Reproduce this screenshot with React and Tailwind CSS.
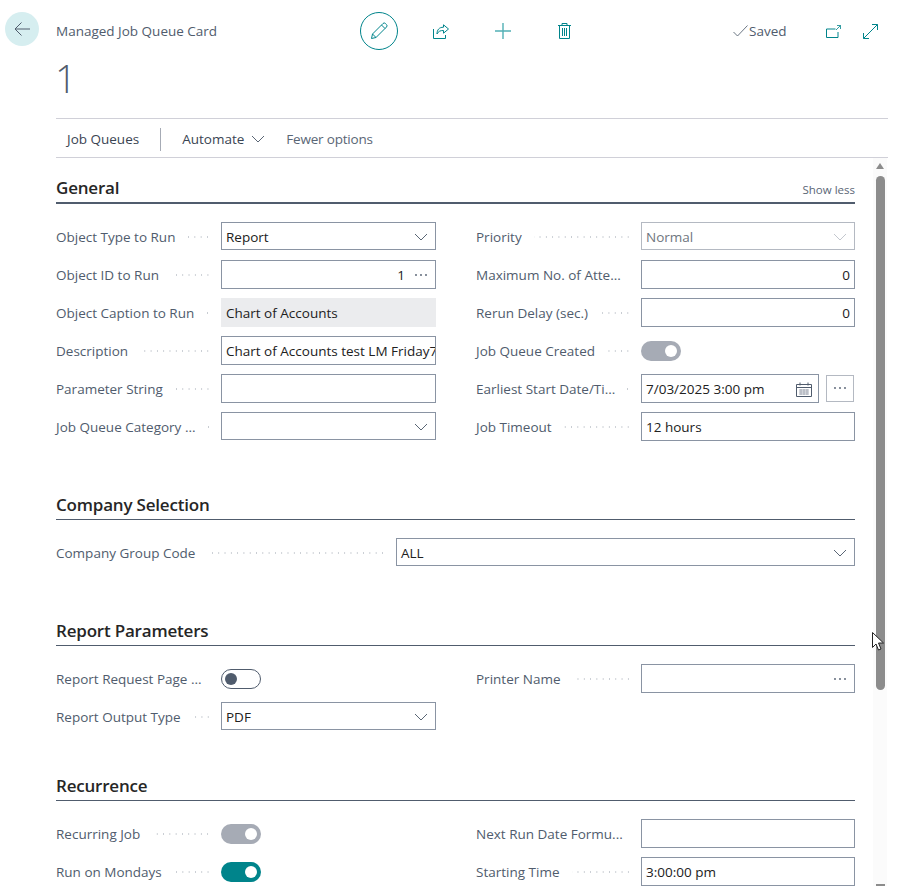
import React from 'react';

const font = { fontFamily: '"Open Sans", "Noto Sans", sans-serif' };

function Chevron({ light }) {
  return (
    <svg width="14" height="8" viewBox="0 0 14 8" fill="none" className={light ? 'stroke-[#c3c7ce]' : 'stroke-[#5a6675]'}>
      <path d="M1 1l6 6 6-6" strokeWidth="1" />
    </svg>
  );
}

function Dots() {
  return (
    <svg width="14" height="4" viewBox="0 0 14 4" className="text-[#505c6d]" fill="currentColor">
      <circle cx="2" cy="2" r="0.9" />
      <circle cx="7" cy="2" r="0.9" />
      <circle cx="12" cy="2" r="0.9" />
    </svg>
  );
}

function Leader() {
  return <span className="ml-3 h-[2px] min-w-0 flex-1 bg-[radial-gradient(circle,#c8ccd2_1px,transparent_1px)] bg-[length:6.3px_2px] bg-right bg-repeat-x"></span>;
}

function Label({ text }) {
  return (
    <div className="flex w-[165px] shrink-0 items-center pt-[2px] pr-[10px]">
      <span className="whitespace-nowrap text-[13.5px] text-[#505c6d]">{text}</span>
      <Leader />
    </div>
  );
}

function Input({ children, className = '', h = 'h-[29px]', border = 'border-[#8a94a3]', bg = 'bg-white', color = 'text-[#212121]' }) {
  return (
    <div className={`flex ${h} min-w-0 flex-1 items-center overflow-hidden border pt-[2px] ${border} ${bg} ${color} px-[4px] text-[13.5px] whitespace-nowrap ${className}`}>
      {children}
    </div>
  );
}

function Select({ value, disabled }) {
  return (
    <Input
      h="h-[28px]"
      border={disabled ? 'border-[#b4b9c2]' : 'border-[#8a94a3]'}
      color={disabled ? 'text-[#6f7680]' : 'text-[#212121]'}
      className="justify-between pr-[7px]"
    >
      <span>{value}</span>
      <Chevron light={disabled} />
    </Input>
  );
}

function Toggle({ state }) {
  if (state === 'off') {
    return (
      <div className="mt-[2px] flex h-[20px] w-[40px] items-center rounded-full border border-[#505c6d] bg-white pl-[3px]">
        <div className="h-[12px] w-[12px] rounded-full bg-[#505c6d]"></div>
      </div>
    );
  }
  return (
    <div className={`mt-[2px] flex h-[20px] w-[40px] items-center justify-end rounded-full pr-[4px] ${state === 'on' ? 'bg-[#00848b]' : 'bg-[#a6abb5]'}`}>
      <div className="h-[12px] w-[12px] rounded-full bg-white"></div>
    </div>
  );
}

function Row({ label, children }) {
  return (
    <div className="flex h-[38px] items-center">
      <Label text={label} />
      <div className="flex min-w-0 flex-1 items-center">{children}</div>
    </div>
  );
}

function Heading({ children, right, thick }) {
  return (
    <div className={`flex h-[32px] items-center justify-between pt-[2px] ${thick ? 'border-b-2' : 'border-b'} border-[#505c6d]`}>
      <h2 className="text-[17px] font-semibold tracking-[-0.2px] text-[#262626]">{children}</h2>
      {right}
    </div>
  );
}

export default function App() {
  return (
    <div className="relative h-[886px] w-[923px] overflow-hidden bg-white" style={font}>
      {/* header */}
      <div className="flex h-[62px] items-center pl-[5px]">
        <button className="mb-[4px] flex h-[34px] w-[34px] items-center justify-center rounded-full bg-[#d6eef0]">
          <svg width="16" height="14" viewBox="0 0 16 14" fill="none" stroke="#505c6d" strokeWidth="1">
            <path d="M16 7H1M7.500.5L1 7l6.500 6.500" />
          </svg>
        </button>
        <span className="ml-[17px] w-[304px] text-[13.5px] text-[#505c6d]">Managed Job Queue Card</span>
        <button className="flex h-[38px] w-[38px] items-center justify-center rounded-full border border-[#00848b]">
          <svg width="18" height="18" viewBox="0 0 18 18" fill="none" stroke="#00848b" strokeWidth="1">
            <path d="M1.500 16.500l1-4.500L13 1.500a1.700 1.700 0 0 1 2.400 0l1.100 1.100a1.700 1.700 0 0 1 0 2.400L6 15.500l-4.500 1zM2.500 12l3.500 3.500M11.500 3l3.500 3.500" />
          </svg>
        </button>
        <svg className="ml-[35px]" width="16" height="15" viewBox="0 0 16 15" fill="none" stroke="#00848b" strokeWidth="1">
          <path d="M.5 5v9.500h12V11" />
          <path d="M15.500 5L10.500.8v2.400C6 3.200 4 6 4 10c1.500-3 3.500-3.500 6.500-3.500v2.700z" />
        </svg>
        <svg className="ml-[46px]" width="16" height="16" viewBox="0 0 16 16" stroke="#52b0b5" strokeWidth="1.4">
          <path d="M8 0v16M0 8h16" />
        </svg>
        <svg className="ml-[47px]" width="13" height="16" viewBox="0 0 13 16" fill="none" stroke="#00848b" strokeWidth="1">
          <path d="M0 2.500h13M4 2.500V.5h5v2M1.500 2.500v13h10v-13M4.500 5v8M6.500 5v8M8.500 5v8" />
        </svg>
        <svg className="ml-[162px]" width="15" height="12" viewBox="0 0 15 12" fill="none" stroke="#5a6675" strokeWidth="0.9">
          <path d="M.5 7l4 4L14.500.5" />
        </svg>
        <span className="ml-[1px] w-[37px] text-[13.5px] text-[#505c6d]">Saved</span>
        <svg className="ml-[40px]" width="15" height="13" viewBox="0 0 15 13" fill="none" stroke="#00848b" strokeWidth="1">
          <path d="M.5 4v8.500h11.500V7M.5 4h9" />
          <path d="M10 5l4.500-4.500M11 .5h3.500V4" strokeWidth="0.8" />
        </svg>
        <svg className="ml-[22px]" width="15" height="15" viewBox="0 0 15 15" fill="none" stroke="#00848b" strokeWidth="1">
          <path d="M.5 14.500l14-14M9 .5h5.500V6M.5 9v5.500H6" />
        </svg>
      </div>
      <div className="ml-[55px] h-[56px] text-[38px] leading-[33px] font-light text-[#505c6d]">1</div>

      {/* actions */}
      <div className="ml-[56px] mr-[35px] flex h-[40px] items-center border-y border-[#d0d0d8] pt-[2px] text-[13.5px] text-[#3a4452]">
        <span className="ml-[11px]">Job Queues</span>
        <span className="ml-[21px] h-[23px] w-px bg-[#a6abb5]"></span>
        <span className="ml-[21px]">Automate</span>
        <span className="ml-[7px]"><Chevron /></span>
        <span className="ml-[21px] tracking-[-0.2px] text-[#5a6675]">Fewer options</span>
      </div>

      {/* form with scrollbar */}
      <div className="flex">
        <div className="ml-[56px] w-[799px] pt-[14px]">
          <Heading thick right={<span className="mt-[4px] text-[11.5px] text-[#5a6675]">Show less</span>}>General</Heading>
          <div className="mt-[13px] grid grid-cols-[380px_379px] gap-x-[40px]">
            <div>
              <Row label="Object Type to Run"><Select value="Report" /></Row>
              <Row label="Object ID to Run">
                <Input className="justify-end gap-[9px] pr-[7px]"><span>1</span><Dots /></Input>
              </Row>
              <Row label="Object Caption to Run">
                <Input border="border-[#ebecee]" bg="bg-[#ebecee]">Chart of Accounts</Input>
              </Row>
              <Row label="Description"><Input>Chart of Accounts test LM Friday7</Input></Row>
              <Row label="Parameter String"><Input /></Row>
              <Row label="Job Queue Category ..."><Select value="" /></Row>
            </div>
            <div>
              <Row label="Priority"><Select value="Normal" disabled /></Row>
              <Row label="Maximum No. of Atte..."><Input className="justify-end">0</Input></Row>
              <Row label="Rerun Delay (sec.)"><Input className="justify-end">0</Input></Row>
              <Row label="Job Queue Created"><Toggle state="grey" /></Row>
              <Row label="Earliest Start Date/Ti...">
                <Input className="justify-between pr-[6px]">
                  <span>7/03/2025 3:00 pm</span>
                  <svg width="16" height="15" viewBox="0 0 16 15" fill="none" stroke="#505c6d" strokeWidth="1">
                    <path d="M.5 2.500h15v12H.5zM.5 5.500h15M4 .5v3M12 .5v3" />
                    <path d="M3 8h10M3 10h10M3 12h10M5 7v6M8 7v6M11 7v6" stroke="#a6abb5" />
                  </svg>
                </Input>
                <div className="ml-[7px] mr-[1px] flex h-[27px] w-[28px] shrink-0 items-center justify-center border border-[#b4b9c2]"><Dots /></div>
              </Row>
              <Row label="Job Timeout"><Input>12 hours</Input></Row>
            </div>
          </div>

          <div className="mt-[43px]">
            <Heading>Company Selection</Heading>
          </div>
          <div className="mt-[13px]">
            <div className="flex h-[38px] items-center">
              <div className="flex w-[340px] shrink-0 items-center pt-[2px] pr-[10px]">
                <span className="whitespace-nowrap text-[13.5px] text-[#505c6d]">Company Group Code</span>
                <Leader />
              </div>
              <Select value="ALL" />
            </div>
          </div>

          <div className="mt-[43px]">
            <Heading>Report Parameters</Heading>
          </div>
          <div className="mt-[13px] grid grid-cols-[380px_379px] gap-x-[40px]">
            <div>
              <Row label="Report Request Page ..."><Toggle state="off" /></Row>
              <Row label="Report Output Type"><Select value="PDF" /></Row>
            </div>
            <div>
              <Row label="Printer Name">
                <Input className="justify-end pr-[7px]"><Dots /></Input>
              </Row>
            </div>
          </div>

          <div className="mt-[34px]">
            <Heading>Recurrence</Heading>
          </div>
          <div className="mt-[13px] grid grid-cols-[380px_379px] gap-x-[40px]">
            <div>
              <Row label="Recurring Job"><Toggle state="grey" /></Row>
              <Row label="Run on Mondays"><Toggle state="on" /></Row>
            </div>
            <div>
              <Row label="Next Run Date Formu..."><Input /></Row>
              <Row label="Starting Time"><Input>3:00:00 pm</Input></Row>
            </div>
          </div>
        </div>

        {/* scrollbar */}
        <div className="ml-[18px] flex h-[728px] w-[14px] flex-col items-center bg-[#fbfbfb] pt-[5px]">
          <div className="h-0 w-0 border-x-[4px] border-b-[6px] border-x-transparent border-b-[#8c8c8c]"></div>
          <div className="mt-[7px] h-[514px] w-[9px] rounded-full bg-[#8c8c8c]"></div>
          <div className="mt-auto h-[2px] w-[9px] bg-[#8c8c8c]"></div>
        </div>
      </div>

      {/* mouse pointer */}
      <svg className="absolute left-[872px] top-[632px]" width="12" height="20" viewBox="0 0 12 20" fill="white" stroke="#222" strokeWidth="1">
        <path d="M.5.5v15l3.500-3.500 2.500 6 2.500-1-2.500-6h5z" />
      </svg>
    </div>
  );
}
